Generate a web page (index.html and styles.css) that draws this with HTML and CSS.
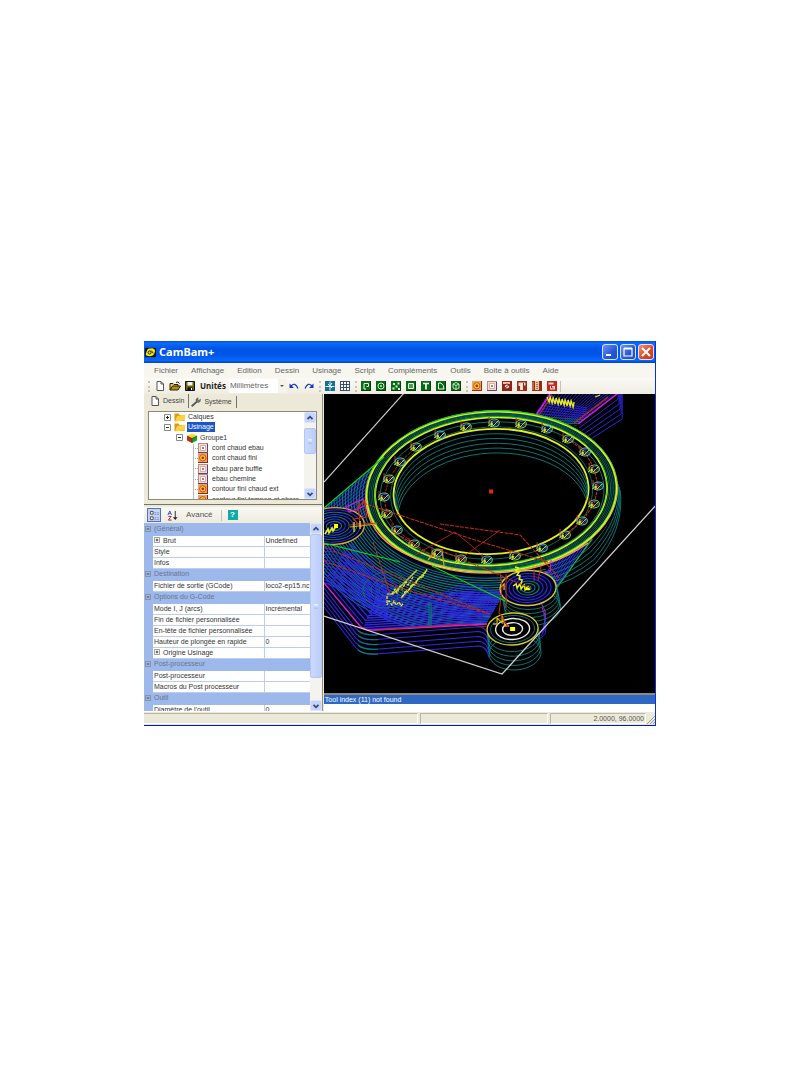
FILE: index.html
```html
<!DOCTYPE html>
<html lang="fr">
<head>
<meta charset="utf-8">
<title>CamBam+</title>
<link rel="stylesheet" href="styles.css">
</head>
<body>
<svg class="defs" aria-hidden="true">
  <symbol id="page" viewBox="0 0 10 10"><path d="M2 .5h4l2.500 2.500v6.500h-6.500z" fill="#fff" stroke="#555"/><path d="M6 .5V3h2.500" fill="none" stroke="#555"/></symbol>
  <symbol id="open" viewBox="0 0 12 10"><path d="M1 9V2.500h3l1 1h4V5" fill="#e8c84a" stroke="#2b2608"/><path d="M1 9l2.500-4H11.500L9 9z" fill="#b08c1c" stroke="#2b2608"/><path d="M7 1.500q2-1.500 3.500 1" fill="none" stroke="#222"/></symbol>
  <symbol id="save" viewBox="0 0 10 10"><path d="M.5.5h9v9h-9z" fill="#6b6414" stroke="#111"/><path d="M2.500 1h5v3.500h-5z" fill="#f4f4ee"/><path d="M2.500 6.500h5V9h-5z" fill="#111"/><path d="M6 7h1v2H6z" fill="#fff"/></symbol>
  <symbol id="undo" viewBox="0 0 10 10"><path d="M2 5Q6 .5 9 7.500" fill="none" stroke="#1638c8" stroke-width="1.200"/><path d="M.5 2.500V7H5z" fill="#1638c8"/></symbol>
  <symbol id="redo" viewBox="0 0 10 10"><path d="M8 5Q4 .5 1 7.500" fill="none" stroke="#1638c8" stroke-width="1.200"/><path d="M9.500 2.500V7H5z" fill="#1638c8"/></symbol>
  <symbol id="axes" viewBox="0 0 10 10"><path d="M0 0h10v10H0z" fill="#176f96"/><path d="M5 .5v9M.5 5.500h9M3 3l4 4M7 2L5 5" stroke="#d9f4ff" fill="none"/></symbol>
  <symbol id="grid" viewBox="0 0 10 10"><path d="M0 0h10v10H0z" fill="#34506e"/><path d="M1 1h2v2H1zM4 1h2v2H4zM7 1h2v2H7zM1 4h2v2H1zM4 4h2v2H4zM7 4h2v2H7zM1 7h2v2H1zM4 7h2v2H4zM7 7h2v2H7z" fill="#fff"/></symbol>
  <symbol id="green" viewBox="0 0 10 10"><path d="M0 0h10v10H0z" fill="#086a17"/><path d="M.5 9.500h9V.5" stroke="#023c0a" fill="none"/></symbol>
  <symbol id="poly" viewBox="0 0 10 10"><use href="#green"/><path d="M3 8V2.500h4.500V5.500H5.500M3 8h2" fill="none" stroke="#e6ffe6"/></symbol>
  <symbol id="circle" viewBox="0 0 10 10"><use href="#green"/><circle cx="5" cy="5" r="3" fill="none" stroke="#c9f5c9"/><circle cx="5" cy="5" r="1" fill="#c9f5c9"/></symbol>
  <symbol id="points" viewBox="0 0 10 10"><use href="#green"/><path d="M2 2h2v2H2zM6.500 1.500h2v2h-2zM4.500 4.500h2v2h-2zM1.500 6.500h2v2h-2zM7 7h2v2H7z" fill="#c9f5c9"/></symbol>
  <symbol id="rect" viewBox="0 0 10 10"><use href="#green"/><path d="M2.500 2.500h5v5h-5z" fill="#4c9a56" stroke="#e6ffe6"/></symbol>
  <symbol id="text" viewBox="0 0 10 10"><use href="#green"/><path d="M2 2.500h6M5 2.500V8.500" fill="none" stroke="#fff" stroke-width="1.600"/></symbol>
  <symbol id="arc" viewBox="0 0 10 10"><use href="#green"/><path d="M2.500 8V2H5q3 2 3 6z" fill="none" stroke="#e6ffe6"/></symbol>
  <symbol id="solid" viewBox="0 0 10 10"><use href="#green"/><path d="M5 1.500l3 1.500v4L5 8.500 2 7V3zM2 3l3 1.500L8 3M5 4.500v4" fill="none" stroke="#e6ffe6" stroke-width=".8"/></symbol>
  <symbol id="profile" viewBox="0 0 10 10"><path d="M0 0h10v10H0z" fill="#8a2b1c"/><path d="M0 0h9v9H0z" fill="#eaa466"/><circle cx="4.800" cy="4.800" r="3.200" fill="#f6d621" stroke="#d2481a"/><circle cx="4.800" cy="4.800" r="1.400" fill="#b8220e"/></symbol>
  <symbol id="pocket" viewBox="0 0 10 10"><path d="M0 0h10v10H0z" fill="#c08a80"/><path d="M1 1h8v8H1z" fill="#f4ddd5"/><path d="M2.500 2.500h5v5h-5z" fill="#fff" stroke="#d49a8c" stroke-width=".8"/><path d="M4 4h2v2H4z" fill="#c07a6c"/><path d="M0 9.500h9.500V1" fill="none" stroke="#54437c"/></symbol>
  <symbol id="drill" viewBox="0 0 10 10"><path d="M0 0h10v10H0z" fill="#9c1f12"/><path d="M1 1h7v2H1z" fill="#f4c0a8"/><circle cx="5" cy="5.500" r="2.500" fill="#efe0d4" stroke="#4f332d"/><path d="M2 8L8 3" stroke="#a22"/></symbol>
  <symbol id="engrave" viewBox="0 0 10 10"><path d="M0 0h10v10H0z" fill="#a02c18"/><path d="M1.500 1.500h7v3H6V9H3V5H1.500z" fill="#ece0d4"/><path d="M6.500 2v4" stroke="#703020"/></symbol>
  <symbol id="lathe" viewBox="0 0 10 10"><path d="M0 0h10v10H0z" fill="#9c2b14"/><path d="M3 0h4v9H3z" fill="#e9c6a0"/><path d="M5 1v7" stroke="#513020" stroke-dasharray="1 1"/><path d="M1 1v8" stroke="#e8a27a"/></symbol>
  <symbol id="nc" viewBox="0 0 10 10"><path d="M0 0h10v10H0z" fill="#c22a1b"/><path d="M1.500 1.500h5v2h-5zM3 5h5v3.500H3z" fill="#f5d9d2"/><path d="M4.500 5v2h2" stroke="#b22" fill="none"/></symbol>
  <symbol id="folder" viewBox="0 0 12 10"><path d="M.5 1.500h4l1 1.500h5v6H.5z" fill="#d99a10"/><path d="M3 4L11.500 2.500 10 8.500 1 9.500z" fill="#ffd23c"/></symbol>
  <symbol id="cube" viewBox="0 0 12 10"><path d="M1 3l5-2.500L11 3 6 5.500z" fill="#f0e020"/><path d="M1 3l5 2.500V10L1 7.500z" fill="#d32218"/><path d="M11 3L6 5.500V10l5-2.500z" fill="#16a32a"/><path d="M1 3l5 2.500L11 3M6 5.500V10" stroke="#24340e" fill="none" stroke-width=".7"/></symbol>
  <symbol id="wrench" viewBox="0 0 12 12"><path d="M1.500 10.500L7 5.500" stroke="#555" stroke-width="2.200" stroke-linecap="round"/><path d="M6 5V2.500L8.500.8 8.200 3.200l1.600.6L11.500 2.500 11 5.500 8.500 6.800z" fill="#777" stroke="#444" stroke-width=".5"/></symbol>
  <symbol id="up" viewBox="0 0 10 10"><path d="M2.500 6.200L5 3.700l2.500 2.500" fill="none" stroke="#33487c" stroke-width="1.700"/></symbol>
  <symbol id="down" viewBox="0 0 10 10"><path d="M2.500 3.800L5 6.300l2.500-2.500" fill="none" stroke="#33487c" stroke-width="1.700"/></symbol>
  <symbol id="plus" viewBox="0 0 7 7"><path d="M.5.5h6v6h-6z" fill="#fff" stroke="#888"/><path d="M2 3.500h3M3.500 2v3" stroke="#222"/></symbol>
  <symbol id="minus" viewBox="0 0 7 7"><path d="M.5.5h6v6h-6z" fill="none" stroke="#888"/><path d="M2 3.500h3" stroke="#333"/></symbol>
</svg>

<main class="window">
  <header class="titlebar">
    <svg class="logo" viewBox="0 0 12 12"><path d="M0 1h12v10H0z" fill="#10140c"/><path d="M2 4Q3 1 9 1.500 12 3 10.500 6 10 10 5 10 0 10 1 7z" fill="#f6e60c"/><circle cx="5" cy="6" r="1.700" fill="none" stroke="#111"/><path d="M7 4l2 3" stroke="#111"/></svg>
    <h1>CamBam+</h1>
    <div class="controls">
      <button aria-label="Réduire"><svg viewBox="0 0 14 14"><path d="M3 10h5" stroke="#fff" stroke-width="2"/></svg></button>
      <button aria-label="Agrandir"><svg viewBox="0 0 14 14"><path d="M3 3.500h8V11H3z" fill="none" stroke="#fff" stroke-width="1.200"/><path d="M3 3.500h8" stroke="#fff" stroke-width="2"/></svg></button>
      <button class="close" aria-label="Fermer"><svg viewBox="0 0 14 14"><path d="M3 3l8 8M11 3l-8 8" stroke="#fff" stroke-width="2"/></svg></button>
    </div>
  </header>

  <nav class="menu">
    <button>Fichier</button><button>Affichage</button><button>Edition</button><button>Dessin</button><button>Usinage</button><button>Script</button><button>Compléments</button><button>Outils</button><button>Boite à outils</button><button>Aide</button>
  </nav>

  <div class="toolbar">
    <i class="grip"></i>
    <button aria-label="Nouveau"><svg><use href="#page"/></svg></button>
    <button aria-label="Ouvrir"><svg class="large"><use href="#open"/></svg></button>
    <button aria-label="Enregistrer"><svg><use href="#save"/></svg></button>
    <label for="units">Unités</label>
    <span class="combo"><select id="units"><option>Millimètres</option><option>Pouces</option></select></span>
    <button aria-label="Annuler"><svg><use href="#undo"/></svg></button>
    <button aria-label="Rétablir"><svg><use href="#redo"/></svg></button>
    <i class="grip"></i>
    <button aria-label="Axes"><svg><use href="#axes"/></svg></button>
    <button aria-label="Grille"><svg><use href="#grid"/></svg></button>
    <i class="grip"></i>
    <button aria-label="Polyligne"><svg><use href="#poly"/></svg></button>
    <button aria-label="Cercle"><svg><use href="#circle"/></svg></button>
    <button aria-label="Points"><svg><use href="#points"/></svg></button>
    <button aria-label="Rectangle"><svg><use href="#rect"/></svg></button>
    <button aria-label="Texte"><svg><use href="#text"/></svg></button>
    <button aria-label="Arc"><svg><use href="#arc"/></svg></button>
    <button aria-label="Surface"><svg><use href="#solid"/></svg></button>
    <i class="grip"></i>
    <button aria-label="Contour"><svg><use href="#profile"/></svg></button>
    <button aria-label="Poche"><svg><use href="#pocket"/></svg></button>
    <button aria-label="Perçage"><svg><use href="#drill"/></svg></button>
    <button aria-label="Gravure"><svg><use href="#engrave"/></svg></button>
    <button aria-label="Tournage"><svg><use href="#lathe"/></svg></button>
    <button aria-label="GCode"><svg><use href="#nc"/></svg></button>
    <i class="rule"></i>
  </div>

  <div class="body">
    <aside class="side">
      <section class="explorer">
        <div class="tabs">
          <button class="active"><svg><use href="#page"/></svg>Dessin</button>
          <button><svg><use href="#wrench"/></svg>Système</button>
        </div>
        <div class="tree">
          <ul class="nodes">
            <li><svg class="box"><use href="#plus"/></svg><svg class="ico"><use href="#folder"/></svg><span>Calques</span></li>
            <li><svg class="box"><use href="#minus"/></svg><svg class="ico"><use href="#folder"/></svg><span class="selected">Usinage</span></li>
            <li class="group"><svg class="box"><use href="#minus"/></svg><svg class="ico"><use href="#cube"/></svg><span>Groupe1</span></li>
            <li class="op"><svg class="ico"><use href="#pocket"/></svg><span>cont chaud ebau</span></li>
            <li class="op"><svg class="ico"><use href="#profile"/></svg><span>cont chaud fini</span></li>
            <li class="op"><svg class="ico"><use href="#pocket"/></svg><span>ebau pare buffle</span></li>
            <li class="op"><svg class="ico"><use href="#pocket"/></svg><span>ebau chemine</span></li>
            <li class="op"><svg class="ico"><use href="#profile"/></svg><span>contour fini chaud ext</span></li>
            <li class="op"><svg class="ico"><use href="#profile"/></svg><span>contour fini tampon et phare</span></li>
          </ul>
          <div class="scroll">
            <button aria-label="Haut"><svg><use href="#up"/></svg></button>
            <div class="track tree-track"><i class="thumb"></i></div>
            <button aria-label="Bas"><svg><use href="#down"/></svg></button>
          </div>
        </div>
      </section>

      <section class="properties">
        <div class="propbar">
          <button class="pressed" aria-label="Par catégorie"><svg viewBox="0 0 12 12"><path d="M1.500 1.500h3v3h-3zM1.500 7.500h3v3h-3z" fill="#fff" stroke="#445"/><path d="M6 3h2M9 3h2M6 5h2M9 5h2M6 8.500h2M9 8.500h2M6 10.500h2M9 10.500h2" stroke="#6d86c5"/></svg></button>
          <button aria-label="Alphabétique"><svg viewBox="0 0 12 12"><path d="M1 5.500L3 1l2 4.500M2 4h2" fill="none" stroke="#2f4fc0"/><path d="M1.500 7h3l-3 4h3.500" fill="none" stroke="#8d1d2c"/><path d="M9 1v8" stroke="#222"/><path d="M6.500 8h5L9 11z" fill="#222"/></svg></button>
          <button class="advanced">Avancé</button>
          <i class="rule"></i>
          <button class="help" aria-label="Aide">?</button>
        </div>
        <div class="sheet">
          <div class="sheet-view">
          <table>
            <colgroup><col class="gutter"><col class="name"><col></colgroup>
            <tr class="cat"><th><svg><use href="#minus"/></svg></th><td colspan="2">(Général)</td></tr>
            <tr><th></th><td><svg><use href="#plus"/></svg>Brut</td><td>Undefined</td></tr>
            <tr><th></th><td>Style</td><td></td></tr>
            <tr><th></th><td>Infos</td><td></td></tr>
            <tr class="cat"><th><svg><use href="#minus"/></svg></th><td colspan="2">Destination</td></tr>
            <tr><th></th><td>Fichier de sortie (GCode)</td><td>loco2-ep15.nc</td></tr>
            <tr class="cat"><th><svg><use href="#minus"/></svg></th><td colspan="2">Options du G-Code</td></tr>
            <tr><th></th><td>Mode I, J (arcs)</td><td>Incrémental</td></tr>
            <tr><th></th><td>Fin de fichier personnalisée</td><td></td></tr>
            <tr><th></th><td>En-tête de fichier personnalisée</td><td></td></tr>
            <tr><th></th><td>Hauteur de plongée en rapide</td><td>0</td></tr>
            <tr><th></th><td><svg><use href="#plus"/></svg>Origine Usinage</td><td></td></tr>
            <tr class="cat"><th><svg><use href="#minus"/></svg></th><td colspan="2">Post-processeur</td></tr>
            <tr><th></th><td>Post-processeur</td><td></td></tr>
            <tr><th></th><td>Macros du Post processeur</td><td></td></tr>
            <tr class="cat"><th><svg><use href="#minus"/></svg></th><td colspan="2">Outil</td></tr>
            <tr><th></th><td>Diamètre de l'outil</td><td>0</td></tr>
          </table>
          </div>
          <div class="scroll">
            <button aria-label="Haut"><svg><use href="#up"/></svg></button>
            <div class="track"><i class="thumb"></i></div>
            <button aria-label="Bas"><svg><use href="#down"/></svg></button>
          </div>
        </div>
      </section>
    </aside>

    <section class="work">
      <svg class="view" id="view" viewBox="324 394 331 299" preserveAspectRatio="none" role="img" aria-label="Parcours d'outil"></svg>
      <div class="log"><p>Tool index (11) not found</p></div>
    </section>
  </div>

  <footer class="status">
    <span class="wide"></span><span class="mid"></span><span class="coords">2.0000, 96.0000</span>
    <svg class="sizer" viewBox="0 0 9 9"><path d="M1 9l8-8M4 9l5-5M7 9l2-2" stroke="#9d9b8c"/></svg>
  </footer>
</main>
<script src="drawing.js"></script>
</body>
</html>
```
FILE: styles.css
```css
* { box-sizing: border-box; }
body {
  margin: 0;
  min-height: 100vh;
  display: grid;
  place-items: center;
  background: #fff;
  font: 7px/10px "Liberation Sans", sans-serif;
  color: #333;
}
button {
  margin: 0;
  padding: 0;
  border: 0;
  background: none;
  font: inherit;
  color: inherit;
  display: flex;
  align-items: center;
  justify-content: center;
}
svg { display: block; flex: none; }
.defs { position: absolute; width: 0; height: 0; }

.window {
  width: 64%;
  aspect-ratio: 512 / 385;
  display: flex;
  flex-direction: column;
  background: #ece9d8;
  border-right: 1px solid #0831d9;
  border-bottom: 1px solid #0019cf;
}

.titlebar {
  flex: none;
  height: 22px;
  display: flex;
  align-items: center;
  gap: 3px;
  padding: 0 1px;
  background: linear-gradient(#0a4fd0, #0b6bff 10%, #0054e3 35%, #0055e6 60%, #0667ff 88%, #0340b8);
}
.logo { width: 11px; height: 11px; }
.titlebar h1 {
  margin: 0;
  font: bold 11px/16px "Noto Sans", sans-serif;
  color: #fff;
}
.controls { margin-left: auto; display: flex; gap: 2px; }
.controls button {
  width: 16px;
  height: 16px;
  border: 1px solid #d8e4ff;
  border-radius: 3px;
  background: linear-gradient(135deg, #6e93f2, #2457dc 60%, #1c4fc8);
}
.controls .close { background: linear-gradient(135deg, #f0957a, #dc4a22 55%, #c23a14); }
.controls svg { width: 14px; height: 14px; }

.menu {
  flex: none;
  height: 15px;
  display: flex;
  align-items: center;
  gap: 13px;
  padding-left: 10px;
  background: #f7f6ef;
  font-size: 8px;
  color: #686868;
}

.toolbar {
  flex: none;
  height: 16px;
  display: flex;
  align-items: center;
  padding-left: 2px;
  background: linear-gradient(#fbfaf6, #efece0);
}
.toolbar button { width: 15px; height: 15px; flex: none; }
.toolbar svg { width: 10px; height: 10px; }
.toolbar .large { width: 12px; }
.toolbar label { font: bold 8px/12px "Noto Sans", sans-serif; padding: 0 3px; color: #222; }
.grip { width: 2px; margin: 0 2px; height: 11px; border-left: 2px dotted #c6c3b4; flex: none; }
.rule { width: 1px; height: 11px; background: #c6c3b4; }
.combo { position: relative; width: 58px; height: 14px; background: #fff; }
.combo::after {
  content: "";
  position: absolute;
  right: 3px;
  top: 6px;
  border: 2px solid transparent;
  border-top-color: #555;
}
.combo select {
  appearance: none;
  width: 100%;
  height: 100%;
  border: 0;
  border-right: 9px solid #f5f3ea;
  padding: 0 1px;
  background: none;
  font: 8px/14px "Liberation Sans", sans-serif;
  color: #666;
}

.body { flex: 1; min-height: 0; display: flex; }
.side { flex: 0 0 35%; min-width: 0; display: flex; flex-direction: column; border-right: 1px solid #8f8d80; }

.explorer { flex: none; height: 111px; padding: 0 5px 4px 4px; border-bottom: 1px solid #777469; display: flex; flex-direction: column; }
.tabs { display: flex; height: 14px; align-items: flex-end; color: #444; }
.tabs button { height: 12px; gap: 3px; padding: 0 4px 0 2px; border-right: 1px solid #77756a; }
.tabs .active { height: 14px; padding-bottom: 1px; }
.tabs svg { width: 10px; height: 10px; }
.tree {
  flex: 1;
  min-height: 0;
  margin-top: 3px;
  display: flex;
  overflow: hidden;
  background: #fff;
  border: 1px solid #8b897c;
}
.nodes {
  flex: 1;
  min-width: 0;
  height: 93px;
  margin: 0;
  padding: 0 0 0 15px;
  list-style: none;
  display: grid;
  grid-auto-rows: 1fr;
  background: linear-gradient(#bbb, #bbb) 44px 32px / 1px 61px no-repeat;
}
.nodes li { display: flex; align-items: center; white-space: nowrap; color: #333; }
.nodes .box { width: 7px; height: 7px; margin-right: 3px; }
.nodes .ico { width: 12px; height: 10px; margin-right: 1px; }
.nodes .group { padding-left: 12px; }
.nodes .op { padding-left: 29px; }
.nodes .op::before { content: ""; width: 5px; border-top: 1px dotted #aaa; }
.nodes .op .ico { width: 10px; margin-right: 3px; }
.nodes span { padding: 0 1px; line-height: 10px; }
.nodes .selected { background: #1c55c4; color: #fff; }

.scroll { flex: 0 0 12px; display: flex; flex-direction: column; background: #f4f3ee; }
.scroll button { flex: none; height: 11px; border: 1px solid #dbe4fb; border-radius: 2px; background: #c6d4fb; }
.scroll svg { width: 10px; height: 10px; }
.track { flex: 1; display: flex; flex-direction: column; }
.thumb {
  height: 87%;
  border: 1px solid #b3c5f5;
  border-radius: 2px;
  background: linear-gradient(#eef3ff, #a7bcf0) center / 4px 5px no-repeat, linear-gradient(90deg, #cbd9fd, #bccdfa);
}
.tree-track { padding-top: 5px; }
.tree-track .thumb { height: 26px; }

.properties { flex: 1; min-height: 0; display: flex; flex-direction: column; margin-top: 2px; }
.propbar { flex: none; height: 16px; display: flex; align-items: center; gap: 4px; padding-left: 3px; font-size: 8px; color: #555; background: linear-gradient(#f9f8f3, #eeebde); }
.propbar svg { width: 11px; height: 11px; }
.propbar button { height: 14px; min-width: 14px; }
.propbar .pressed { background: #c7d5f0; border: 1px solid #4d72b8; }
.propbar .advanced { padding: 0 4px 0 3px; }
.propbar .help { height: 10px; min-width: 10px; margin-left: 2px; background: #12aaa4; color: #fff; font-weight: bold; }
.sheet { flex: 1; min-height: 0; display: flex; overflow: hidden; }
.sheet-view { flex: 1; min-width: 0; overflow: hidden; }
table { width: 100%; border-collapse: collapse; table-layout: fixed; background: #fff; }
.gutter { width: 9px; }
.name { width: 111px; }
tr { height: 11px; }
th, td { padding: 0 0 0 1px; height: 11px; line-height: 10px; text-align: left; font-weight: normal; white-space: nowrap; border-bottom: 1px solid #bccdf0; }
th { background: #9db8ea; border-color: #9db8ea; }
td:nth-child(3) { border-left: 1px solid #bccdf0; }
.cat, .cat td { height: 12px; background: #9db8ea; border-color: #9db8ea; color: #6a7690; }
th svg { width: 6px; height: 6px; }
td svg { width: 6px; height: 6px; display: inline-block; margin-right: 3px; }

.work { flex: 1; min-width: 0; display: flex; flex-direction: column; padding-left: 1px; background: #ece9d8; }
.view { flex: 1; min-height: 0; width: 100%; background: #000; }
.log { flex: none; height: 18px; border-top: 2px solid #8d8b7e; background: #fff; }
.log p { margin: 0; height: 9px; padding-left: 1px; line-height: 9px; background: #2f68c4; color: #fff; }

.status { flex: none; height: 14px; display: flex; gap: 2px; padding: 1px 0; border-top: 1px solid #fff; }
.status span { border: 1px solid #b9b6a6; border-color: #b9b6a6 #fff #fff #b9b6a6; }
.status .wide { flex: 275; border-left: 0; }
.status .mid { flex: 127; }
.status .coords { flex: 0 0 96px; padding-right: 1px; text-align: right; color: #555; }
.sizer { width: 9px; height: 9px; margin-left: -2px; align-self: flex-end; }
```
FILE: drawing.js
```javascript
const NS = 'http://www.w3.org/2000/svg';
const view = document.getElementById('view');
const TEAL = '#0a7c7a', BLUE = '#3028ea', YELLOW = '#e4ee20', GREEN = '#0cd01c',
      RED = '#c42c14', MAGENTA = '#d81ce0', WHITE = '#d0d0d0';

function add(parent, tag, attrs) {
  const node = document.createElementNS(NS, tag);
  for (const key in attrs) node.setAttribute(key, attrs[key]);
  parent.appendChild(node);
  return node;
}
function clip(id, d) {
  add(add(view, 'clipPath', { id }), 'path', { d, 'clip-rule': 'evenodd' });
  return add(view, 'g', { 'clip-path': `url(#${id})` });
}
function line(g, d, stroke, width = 0.8, extra = {}) {
  return add(g, 'path', { d, stroke, 'stroke-width': width * 1.15, fill: 'none', ...extra });
}
function oval(g, cx, cy, rx, ry, stroke, width = 0.8, fill = 'none', extra = {}) {
  return add(g, 'ellipse', { cx, cy, rx, ry, stroke, 'stroke-width': width * 1.15, fill,
    transform: `rotate(-3 ${cx} ${cy})`, ...extra });
}

/* Stock outline */
line(view, 'M324 482L404 393', WHITE, 1);

/* Upper right lug */
const lug = clip('lug', 'M534 416L549 392H617L576 426Z');
for (let i = 0; i < 24; i++) line(lug, `M${530 + i * 2} 424l${12 + i * 1.6} -32`, BLUE, 0.7);
for (let i = 0; i < 12; i++) line(lug, `M532 ${398 + i * 3}l55 ${10 - i}`, i > 5 ? TEAL : BLUE, 0.7);
for (let i = 1; i < 6; i++) line(view, `M${578 + i} ${424 + i * 4}L${617 + i} ${394 + i * 5}V394`, BLUE, 0.8);
line(view, 'M536 415L550 394M578 424L618 393', MAGENTA, 1.3);
line(view, 'M539 415L552 395M574 423L608 397', RED, 0.9);
line(view, 'M547 397l2 5 1-5 2 6 1-5 2 6 1-6 2 6 1-5 2 6 1-6 2 6 1-5 2 6 1-6 2 6 1-5 2 6 1-5', YELLOW, 1.2);
line(view, 'M595 397l5 -2', YELLOW, 1);

/* Plate side walls */
for (let i = 1; i < 6; i++) {
  const y = i * 4.8;
  line(view, `M324 ${583 + y}L356 ${624 + y}Q363 ${631 + y} 376 ${630 + y}L478 ${622 + y}Q487 ${622 + y} 489 ${634 + y}`, BLUE, 0.9);
  line(view, `M358 ${626 + y}Q364 ${631 + y} 378 ${630 + y}`, TEAL, 1);
}

/* Plate top face */
const FACE = 'M324 508L384 456L366 500L380 540L430 566L490 573L545 569L560 580L500 600L486 624L372 631L360 627L324 583Z';
const plate = clip('plate', FACE);
add(plate, 'path', { d: FACE, fill: '#03031c' });
for (let i = 0; i < 12; i++) line(plate, `M324 ${510 + i * 3.5}L388 ${457 + i * 3.5}`, BLUE, 0.9);
for (let i = 0; i < 26; i++) oval(plate, 492, 494, 130 + i * 2.8, 84 + i * 2.4, TEAL, 0.9);
for (let i = 0; i < 14; i++) line(plate, `M${324 + i * 2} ${583 - i * 3}L${360 + i * 3} ${627 - i * 3}`, BLUE, 1);
for (let i = 0; i < 15; i++) line(plate, `M${362 + i} ${630 - i * 2.4}L500 ${621 - i * 2.1}`, BLUE, 1.1);
for (let i = 0; i < 13; i++) line(plate, `M324 ${549 + i * 2.8}Q348 ${543 + i * 4} 388 ${592 + i * 2.4}`, BLUE, 0.9);
for (let i = 0; i < 7; i++) oval(plate, 387, 590, 4 + i * 4, 3 + i * 3, i % 2 ? TEAL : BLUE, 0.6);
for (let i = 0; i < 8; i++) oval(plate, 468, 602, 3 + i * 3.5, 2 + i * 2.2, BLUE, 0.7);
line(plate, 'M429 603v25M431 603v25', TEAL, 1);
line(view, 'M324 583L360 626Q366 631 376 630L487 624', MAGENTA, 1.2);
line(view, 'M376 630L462 624L488 627', RED, 0.7);

/* Right lower web */
const web = clip('web', 'M530 571L594 538L556 590Z');
for (let i = 0; i < 13; i++) line(web, `M${528 + i * 2.4} 600L${572 + i * 2.4} 535`, BLUE, 0.9);
line(view, 'M557 587L592 539', GREEN, 1.1);
for (let i = 0; i < 6; i++) line(view, `M${541 + i} ${603 + i * 5}L545 ${611 + i * 4.5}L${545 - i} ${624 + i * 3}`, i > 1 ? BLUE : MAGENTA, 0.8);

/* Ring side walls */
const outside = clip('outside', 'M324 394H655V693H324ZM366 496A126 81 -3 1 0 617 484A126 81 -3 1 0 366 496Z');
for (let i = 1; i < 7; i++) {
  line(outside, `M${614 + i} ${472 + i * 3}Q${622 + i * 0.5} ${505 + i * 4} ${586 + i * 1.5} ${540 + i * 4}Q${566 + i} ${558 + i * 4} 548 ${563 + i * 4}`, TEAL, 0.8);
}

/* Ring */
oval(view, 491.5, 491.5, 126, 81, 'none', 0, '#000');
for (let i = 0; i < 6; i++) oval(view, 491.5, 491.5, 117.5 + i * 1.6, 75.5 + i, i % 3 === 1 ? '#169478' : TEAL, 0.6);
oval(view, 492, 493, 112, 71, TEAL, 0.8);
oval(view, 491.5, 493, 101, 66, TEAL, 0.7);
oval(view, 491.5, 492, 126, 81, '#e0a060', 1);
oval(view, 491.5, 491, 125, 80, GREEN, 1.5);
oval(view, 491.5, 492, 125, 80, YELLOW, 1.2);
oval(view, 491, 491.5, 116, 74, YELLOW, 1.6);
oval(view, 491, 490.5, 116, 74, GREEN, 0.6);
oval(view, 491, 491.5, 97.5, 62.5, YELLOW, 1.6, '#000');
line(view, 'M366 500Q367 538 412 557Q455 573 500 572Q548 571 588 543', '#e5a163', 1.1);
const bore = add(view, 'clipPath', { id: 'bore' });
add(bore, 'ellipse', { cx: 491, cy: 491.5, rx: 97, ry: 62, transform: 'rotate(-3 491 491.5)' });
const wall = add(view, 'g', { 'clip-path': 'url(#bore)' });
for (let i = 1; i < 6; i++) oval(wall, 491 + i * 0.4, 491.5 + i * 4.8, 97 - i * 0.3, 62.5, TEAL, 0.8);

/* Drilled holes around the ring */
const holes = [[466,427],[440,435],[416,447],[400,462],[389,479],[384,497],[387,514],[397,530],
  [414,544],[437,553],[461,559],[487,560],[515,556],[542,548],[565,535],[582,521],[594,504],
  [598,486],[594,469],[585,452],[568,439],[547,429],[521,424],[494,423]];
line(view, 'M' + holes.slice(2, 9).map(p => p.join(' ')).join('L'), RED, 0.8, { 'stroke-dasharray': '3 1' });
line(view, 'M' + holes.slice(14, 21).map(p => p.join(' ')).join('L'), RED, 1, { 'stroke-dasharray': '3 1' });
holes.forEach(([x, y], i) => {
  line(view, `M${x - 5} ${y - 6}v6l3 1`, RED, 0.9);
  oval(view, x, y, 5.2, 4, i % 2 ? '#58c8a0' : '#84d048', 1);
  oval(view, x, y, 3.6, 2.6, '#2840d0', 0.8);
  line(view, `M${x - 6} ${y + 3}l4-3 1 3 5-5M${x - 2} ${y - 2}l-1 6`, YELLOW, 0.8);
});
add(view, 'rect', { x: 489, y: 489.5, width: 4, height: 4, fill: '#e82800' });

/* Left boss */
for (let i = 8; i > 0; i--) oval(view, 334, 526, i * 3.8, i * 2.3, i === 8 ? '#d8a838' : i % 2 ? BLUE : TEAL, i === 8 ? 1.1 : 0.9, i === 8 ? '#020214' : 'none');
line(view, 'M325 534l3-5 1 4 3-5 1 3 3-5', YELLOW, 1.4);
add(view, 'rect', { x: 334, y: 524, width: 4, height: 4, fill: '#ff0' });
line(view, 'M346 507l17-8 2 7-16 6z', MAGENTA, 0.9);
line(view, 'M356 512l8-12 3 17-14 2 9 8M358 500l2 26M350 525l28-2', RED, 0.9);
line(view, 'M350 527l27-3', '#d0a020', 1);
line(view, 'M354 522v10M360 521v8', YELLOW, 1.1);

/* Mid boss */
for (let i = 5; i > 0; i--) oval(view, 529 + i * 0.7, 588 + i * 4, 28, 17.5, TEAL, 0.8);
oval(view, 528, 588, 28, 17.5, '#cfc443', 1.2, '#000418');
for (let i = 1; i < 7; i++) oval(view, 528, 588, 27 - i * 4, 17 - i * 2.5, i < 4 ? BLUE : TEAL, 0.9);

/* Lower boss */
for (let i = 5; i > 0; i--) oval(view, 513 + i * 0.4, 630 + i * 4.6, 26, 17, TEAL, 0.8);
oval(view, 512.5, 629, 25.5, 16, '#d8c82c', 1.2, '#000');
oval(view, 512.5, 629, 22, 13.5, TEAL, 0.8);
oval(view, 512.5, 629, 17, 10.5, '#e8e8e8', 1.2);
oval(view, 512.5, 629, 10, 6.3, '#e8e8e8', 1.2);
add(view, 'rect', { x: 510, y: 627, width: 5, height: 4, fill: '#ff0' });

/* Boss lead-ins */
line(view, 'M515 567l3 1-2 3 3 1-2 3 3 1-1 3 3 1-1 4M513 586l3-2 1 4 3-4 1 5 3-4 1 5 3-3 1 3', YELLOW, 1.3);
add(view, 'rect', { x: 526, y: 587, width: 4, height: 3, fill: '#ff0' });
line(view, 'M493 624l4 0v-6l5 5v-7l3 10h4M500 588l4-4v6', '#d8b414', 1.1);
line(view, 'M500 573l2 14-3 26 9 14M506 574v34M534 569v12M541 566l-3 14', RED, 0.9);
line(view, 'M551 560l-1 12-7 1', MAGENTA, 0.9);

/* Slot between plate and ring */
line(view, 'M387 594h6l24-24M401 598l26-28', '#b8bc54', 1.4);
line(view, 'M392 594l3-5 2 4 3-7 2 3 4-7 2 3 5-8M402 597l4-7 2 2 4-8 3 1 4-8 3 1 5-9M387 596v9l2-4 3 4 2-4 2 4 3-3 2 4 2-2', YELLOW, 1.1, { 'stroke-dasharray': '3 1' });
line(view, 'M428 560l8-10 6 0 2 16', '#d8a020', 1.1);

/* Rapid moves */
line(view, 'M363 503L475 540L548 562M440 524L520 535L560 579M324 547L490 614M324 561L400 588L490 614M373 542L390 594M392 531L440 560M440 550L530 588', RED, 0.9, { 'stroke-dasharray': '4 1' });
line(view, 'M415 555L455 532L480 553M460 559L500 530', RED, 0.7);
line(view, 'M324 508L384 457M324 543L400 562M432 566L505 601', GREEN, 1.1);

/* Stock outline in front of the part */
line(view, 'M324 616L502 674L656 505', WHITE, 1.1);
```
